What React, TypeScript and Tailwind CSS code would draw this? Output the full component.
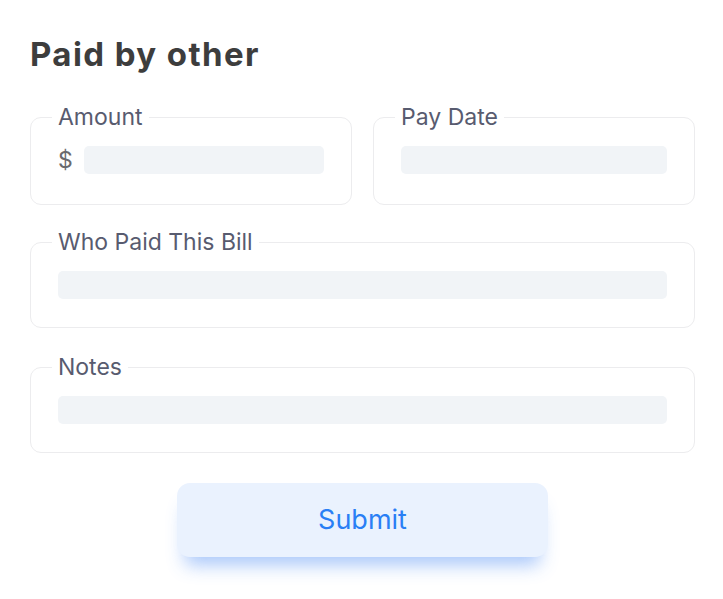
import React from "react";

const FONT = "font-['Inter','Liberation_Sans',sans-serif]";

function Field({
  label,
  children,
  className = "",
}: {
  label: string;
  children: React.ReactNode;
  className?: string;
}) {
  return (
    <fieldset
      className={`rounded-[11px] border border-[#ececee] px-[27px] pt-[16px] pb-[28px] ${className}`}
    >
      <legend className="-ml-[6px] px-[6px] text-[23px] leading-[26px] text-[#585b6f]">
        {label}
      </legend>
      {children}
    </fieldset>
  );
}

function Bar() {
  return <div className="h-[28px] flex-1 rounded-[5px] bg-[#f1f4f7]" />;
}

export default function App() {
  return (
    <div className={`min-h-screen bg-white pl-[30px] pr-[28px] pt-[34px] ${FONT}`}>
      <h1 className="text-[33px] font-bold leading-[40px] tracking-[1.4px] text-[#3d3d3d]">
        Paid by other
      </h1>

      <div className="mt-[30px] grid grid-cols-2 gap-x-[21px]">
        <Field label="Amount">
          <div className="flex items-center gap-[11px]">
            <span className="text-[23px] leading-[28px] text-[#6a6a6e]">$</span>
            <Bar />
          </div>
          <div className="h-[2px]" />
        </Field>
        <Field label="Pay Date">
          <div className="flex">
            <Bar />
          </div>
        </Field>
      </div>

      <Field label="Who Paid This Bill" className="mt-[24px]">
        <div className="flex">
          <Bar />
        </div>
      </Field>

      <Field label="Notes" className="mt-[26px]">
        <div className="flex">
          <Bar />
        </div>
      </Field>

      <div className="mt-[30px] flex justify-center">
        <button className="h-[74px] w-[371px] rounded-[13px] bg-[#eaf2fe] text-[27px] text-[#2a7ff5] shadow-[0_16px_18px_-8px_rgba(66,133,244,0.45)]">
          Submit
        </button>
      </div>
    </div>
  );
}
